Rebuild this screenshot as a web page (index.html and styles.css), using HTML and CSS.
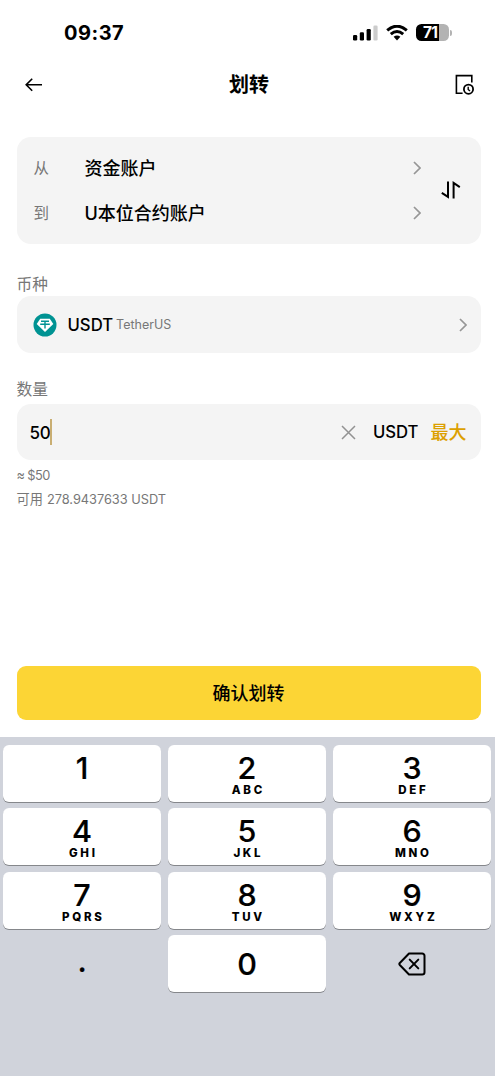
FILE: index.html
```html
<!DOCTYPE html>
<html lang="zh-CN">
<head>
<meta charset="utf-8">
<title>划转</title>
<link rel="stylesheet" href="styles.css">
</head>
<body>
<div class="app">
  <div class="status">
    <span class="time">09:37</span>
    <svg class="signal" width="26" height="16" viewBox="0 0 26 16"><rect x="0" y="10" width="4.2" height="5.5" rx="1.2"/><rect x="6.8" y="7.2" width="4.2" height="8.3" rx="1.2"/><rect x="13.6" y="4" width="4.2" height="11.5" rx="1.2"/><rect x="20.4" y="0.5" width="4.2" height="15" rx="1.2" fill="#ccc"/></svg>
    <svg class="wifi" width="22" height="16" viewBox="0 0 22 16" fill="none" stroke="#000" stroke-width="3"><path d="M1.2 5.4Q11-3 20.8 5.4"/><path d="M4.8 9.1Q11 3.8 17.2 9.1"/><path d="M7.6 11.8Q11 9 14.4 11.8L11 15.4Z" fill="#000" stroke="none"/></svg>
    <div class="battery"><span>71</span></div>
    <i class="battery-tip"></i>
  </div>
  <header class="header">
    <svg width="18" height="14" viewBox="0 0 18 14" fill="none" stroke="#000" stroke-width="1.6"><path d="M1.2 6.7H17M7.2 0.7L1.2 6.7l6 6"/></svg>
    <h1>划转</h1>
    <svg width="20" height="22" viewBox="0 0 20 22" fill="none" stroke="#000" stroke-width="1.6"><path d="M7.6 19.3H1.4V1.6h15.4v6.8"/><circle cx="13.5" cy="15.2" r="4.6" stroke-width="1.8"/><path d="M13.2 12.8v2.7l1.8 1.6" stroke-width="1.4"/></svg>
  </header>
  <section class="accounts">
    <div class="account-rows">
      <div class="account"><span class="dir">从</span><span class="name">资金账户</span><svg class="chev" viewBox="0 0 8 14"><path d="M1 1l6 6-6 6"/></svg></div>
      <div class="account"><span class="dir">到</span><span class="name">U本位合约账户</span><svg class="chev" viewBox="0 0 8 14"><path d="M1 1l6 6-6 6"/></svg></div>
    </div>
    <svg class="swap" width="20" height="18" viewBox="0 0 20 18" fill="none" stroke="#000" stroke-width="2"><path d="M7 0.5v15.4L0.8 11.8M12.6 17.5V2L18.8 6.2"/></svg>
  </section>
  <div class="label">币种</div>
  <section class="field coin">
    <svg width="24" height="24" viewBox="0 0 24 24"><circle cx="12" cy="12" r="11.5" fill="#009393"/><path d="M7.2 5.8h9.6l3.5 5.3-8.3 8-8.3-8z" fill="#fff"/><path d="M8 8.3h8M12 8v7.5M7.2 11.2h9.6" fill="none" stroke="#009393" stroke-width="1.4"/></svg>
    <b class="symbol">USDT</b><span class="coin-name">TetherUS</span>
    <svg class="chev" viewBox="0 0 8 14"><path d="M1 1l6 6-6 6"/></svg>
  </section>
  <div class="label">数量</div>
  <section class="field amount">
    <span class="value">50</span><i class="caret"></i>
    <svg class="clear" width="15" height="15" viewBox="0 0 15 15" fill="none" stroke="#929292" stroke-width="1.5"><path d="M1 1l13 13M14 1L1 14"/></svg>
    <b class="unit">USDT</b><span class="max">最大</span>
  </section>
  <div class="hint"><span class="approx">≈ $50</span></div>
  <div class="hint"><span class="available">可用</span><span class="balance">278.9437633 USDT</span></div>
  <button class="confirm">确认划转</button>
  <div class="keyboard">
    <div class="key"><b>1</b></div>
    <div class="key"><b>2</b><small>ABC</small></div>
    <div class="key"><b>3</b><small>DEF</small></div>
    <div class="key"><b>4</b><small>GHI</small></div>
    <div class="key"><b>5</b><small>JKL</small></div>
    <div class="key"><b>6</b><small>MNO</small></div>
    <div class="key"><b>7</b><small>PQRS</small></div>
    <div class="key"><b>8</b><small>TUV</small></div>
    <div class="key"><b>9</b><small>WXYZ</small></div>
    <div class="key plain"><b class="dot">.</b></div>
    <div class="key zero"><b>0</b></div>
    <div class="key plain"><svg width="28" height="24" viewBox="0 0 28 24" fill="none" stroke="#000" stroke-width="2" stroke-linejoin="round" stroke-linecap="round"><path d="M11 1.5h13.2a2.3 2.3 0 0 1 2.3 2.3v16.4a2.3 2.3 0 0 1-2.3 2.3H11L1.8 13q-.9-1 0-2z"/><path d="M11.7 7.6l8.6 8.8M20.3 7.6l-8.6 8.8"/></svg></div>
  </div>
</div>
</body>
</html>
```
FILE: styles.css
```css
* { box-sizing: border-box; }
body { margin: 0; background: #fff; color: #000; font-family: Inter, "Noto Sans CJK SC", sans-serif; }
svg { display: block; flex: none; }
.app { width: 495px; height: 1076px; display: flex; flex-direction: column; overflow: hidden; white-space: nowrap; }
.status { height: 65px; display: flex; align-items: center; padding-left: 64px; }
.time { width: 289px; font-size: 20px; font-weight: 700; line-height: 24px; letter-spacing: 0.5px; }
.wifi { margin-left: 7px; }
.battery { width: 33px; height: 17px; margin-left: 8px; border-radius: 5.5px; background: linear-gradient(90deg, #000 71%, #b3b3b3 71%); color: #fff; font-size: 15.5px; font-weight: 700; line-height: 17px; padding-left: 7px; letter-spacing: -0.7px; }
.battery-tip { width: 2px; height: 6px; margin-left: 1px; border-radius: 0 3px 3px 0; background: #b3b3b3; }
.header { height: 40px; display: flex; align-items: center; justify-content: space-between; padding: 0 20px 0 25px; }
.header h1 { margin: 0; font-size: 20px; line-height: 28px; font-weight: 700; }
.accounts { height: 107px; margin: 32px 14.5px 0 16.5px; border-radius: 14px; background: #f4f4f4; display: flex; align-items: center; padding: 0 20px 0 17px; }
.account-rows { width: 387px; }
.account { height: 45px; display: flex; align-items: center; }
.dir { width: 51px; color: #777; font-size: 15.5px; padding-bottom: 2px; }
.name { font-size: 18px; font-weight: 500; flex: 1; padding-bottom: 2px; }
.chev { width: 8px; height: 14px; fill: none; stroke: #969696; stroke-width: 1.7; }
.swap { margin-left: 20px; margin-bottom: 1px; }
.label { height: 24px; margin: 28px 16.5px 0; color: #777; font-size: 15.7px; line-height: 25px; }
.field { height: 57px; margin: 0 14.5px 0 16.5px; border-radius: 14px; background: #f4f4f4; display: flex; align-items: center; }
.coin { padding: 0 14px 0 16px; }
.symbol { margin-left: 11px; font-size: 16.7px; font-weight: 500; }
.coin-name { margin-left: 3px; color: #777; font-size: 12.5px; }
.coin .chev { margin-left: auto; }
.label + .amount { margin-top: 3px; height: 56px; }
.coin + .label { margin-top: 24px; }
.amount { padding: 0 14px 0 13px; }
.value { font-size: 17px; font-weight: 500; padding-top: 2px; letter-spacing: -0.3px; }
.caret { width: 2px; height: 26px; background: #c9ae72; }
.clear { margin-left: auto; }
.unit { margin-left: 17px; font-size: 16.7px; font-weight: 500; }
.max { margin-left: 12px; color: #dca000; font-size: 18px; font-weight: 500; padding-bottom: 2px; }
.hint { height: 24px; margin: 0 16.5px; display: flex; align-items: center; color: #777; font-size: 12.8px; }
.approx { letter-spacing: -0.6px; }
.available { font-size: 13.2px; padding-bottom: 2px; }
.amount + .hint { margin-top: 3px; }
.balance { margin-left: 4px; letter-spacing: -0.02px; }
.confirm { height: 54px; margin: 155px 14.5px 17px 16.5px; padding: 0 0 2px; border: 0; border-radius: 9px; background: #fcd535; color: #000; font: 500 18px/52px "Noto Sans CJK SC", sans-serif; }
.keyboard { flex: 1; background: #d0d3db; display: grid; grid-template-columns: repeat(3, 158px); grid-auto-rows: 56.7px; gap: 6.8px 7px; padding: 8px 0 0 3px; align-content: start; }
.key { border-radius: 6px; background: #fff; box-shadow: 0 1px 0 #85878b; display: flex; flex-direction: column; align-items: center; padding-top: 7px; }
.key b { height: 32px; font-size: 30.5px; font-weight: 500; line-height: 32px; -webkit-text-stroke: 0.2px #000; }
.key small { font-size: 11.5px; font-weight: 800; line-height: 12px; letter-spacing: 2.7px; margin-right: -2.7px; }
.plain, .zero { justify-content: center; padding-top: 0; }
.plain { background: none; box-shadow: none; }
.key .dot { height: 38px; }
```
